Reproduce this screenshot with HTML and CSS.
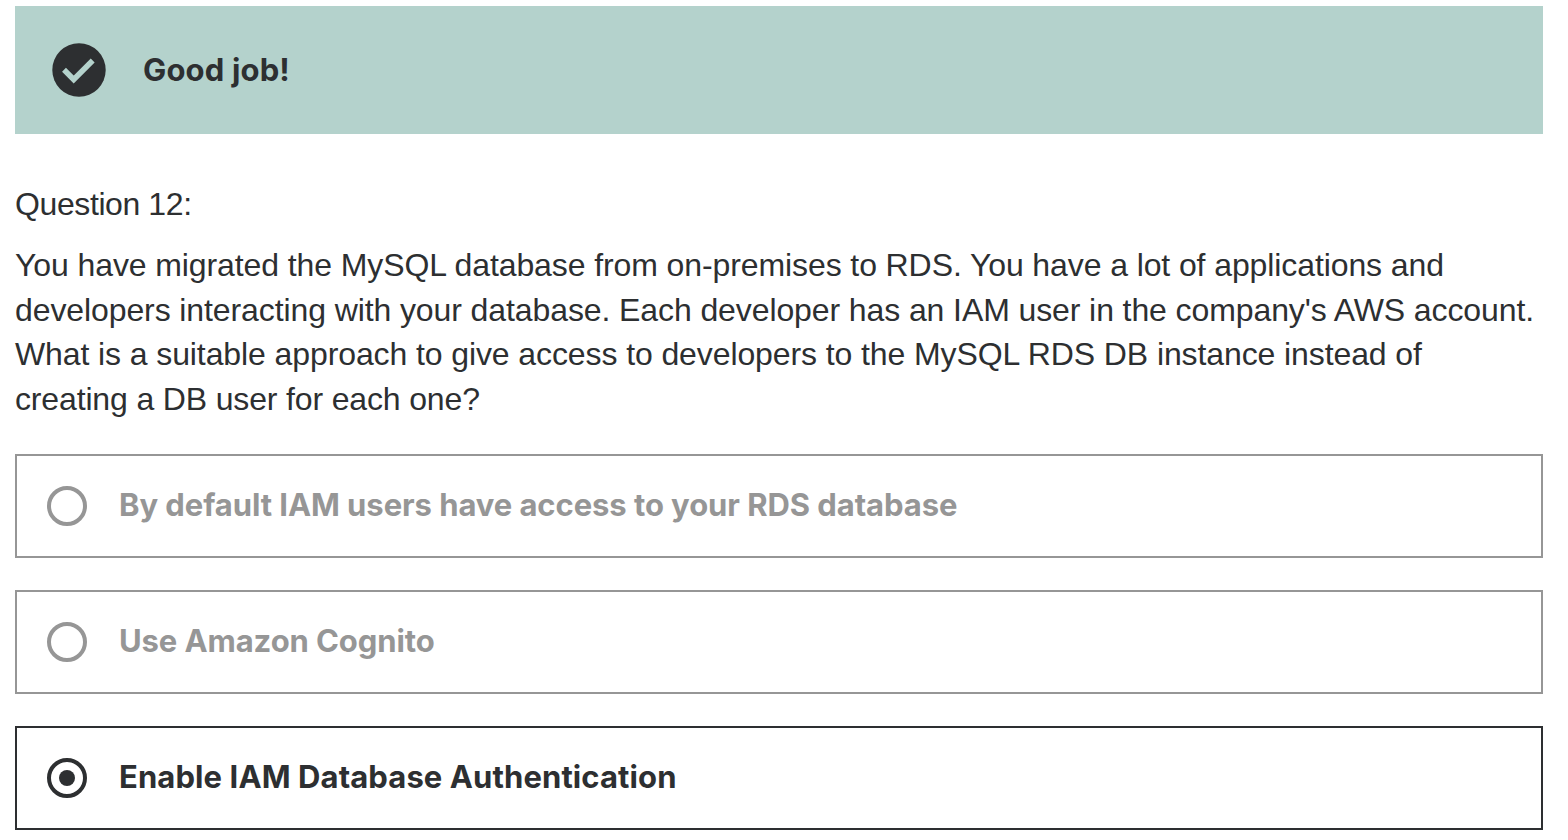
FILE: index.html
```html
<!DOCTYPE html>
<html lang="en">
<head>
<meta charset="utf-8">
<title>Question 12</title>
<link rel="stylesheet" href="styles.css">
</head>
<body>
<main class="quiz">
  <div class="banner">
    <svg class="banner-icon" viewBox="0 0 54 54" aria-hidden="true"><circle cx="27" cy="27" r="26.7" fill="#2d2f31"/><path d="M12 26.800L21.700 36.500L40.700 17.500" fill="none" stroke="#b4d2cc" stroke-width="5.500"/></svg>
    <span class="banner-text">Good job!</span>
  </div>
  <div class="question-number">Question 12:</div>
  <p class="prompt">
    <span class="line">You have migrated the MySQL database from on-premises to RDS. You have a lot of applications and</span>
    <span class="line">developers interacting with your database. Each developer has an IAM user in the company's AWS account.</span>
    <span class="line">What is a suitable approach to give access to developers to the MySQL RDS DB instance instead of</span>
    <span class="line line-last">creating a DB user for each one?</span>
  </p>
  <div class="answers">
    <div class="answer"><span class="radio"></span><span class="label label-iam">By default IAM users have access to your RDS database</span></div>
    <div class="answer"><span class="radio"></span><span class="label label-cognito">Use Amazon Cognito</span></div>
    <div class="answer selected"><span class="radio"></span><span class="label label-auth">Enable IAM Database Authentication</span></div>
  </div>
</main>
</body>
</html>
```
FILE: styles.css
```css
* { box-sizing: border-box; }
body { margin: 0; background: #fff; color: #2d2f31; font-family: "Liberation Sans", Arial, sans-serif; font-size: 32px; overflow: hidden; }
.quiz { padding: 6px 25px 0 15px; }
.banner { display: flex; align-items: center; gap: 37px; height: 128px; padding-left: 37px; background: #b4d2cc; }
.banner-icon { width: 54px; height: 54px; }
.banner-text, .label { padding-bottom: 2px; font-family: Inter, "Liberation Sans", sans-serif; font-size: 31px; font-weight: 700; white-space: nowrap; }
.banner-text { letter-spacing: 0.15px; }
.question-number { margin-top: 48px; line-height: 45px; letter-spacing: -0.4px; }
.prompt { margin: 16px 0 0; }
.line { display: block; width: max-content; line-height: 44.7px; white-space: nowrap; letter-spacing: -0.1px; }
.line-last { letter-spacing: -0.15px; }
.answers { display: grid; gap: 32px; margin-top: 32px; }
.answer { display: flex; align-items: center; gap: 32px; height: 104px; padding-left: 30px; border: 2px solid #969696; color: #969696; }
.label-iam { letter-spacing: -0.07px; }
.label-cognito { letter-spacing: -0.1px; }
.label-auth { letter-spacing: 0.1px; }
.radio { display: flex; align-items: center; justify-content: center; width: 40px; height: 40px; border: 4px solid currentColor; border-radius: 50%; }
.selected { border-color: #2d2f31; color: #2d2f31; }
.selected .radio::after { content: ""; width: 16px; height: 16px; border-radius: 50%; background: currentColor; }
```
